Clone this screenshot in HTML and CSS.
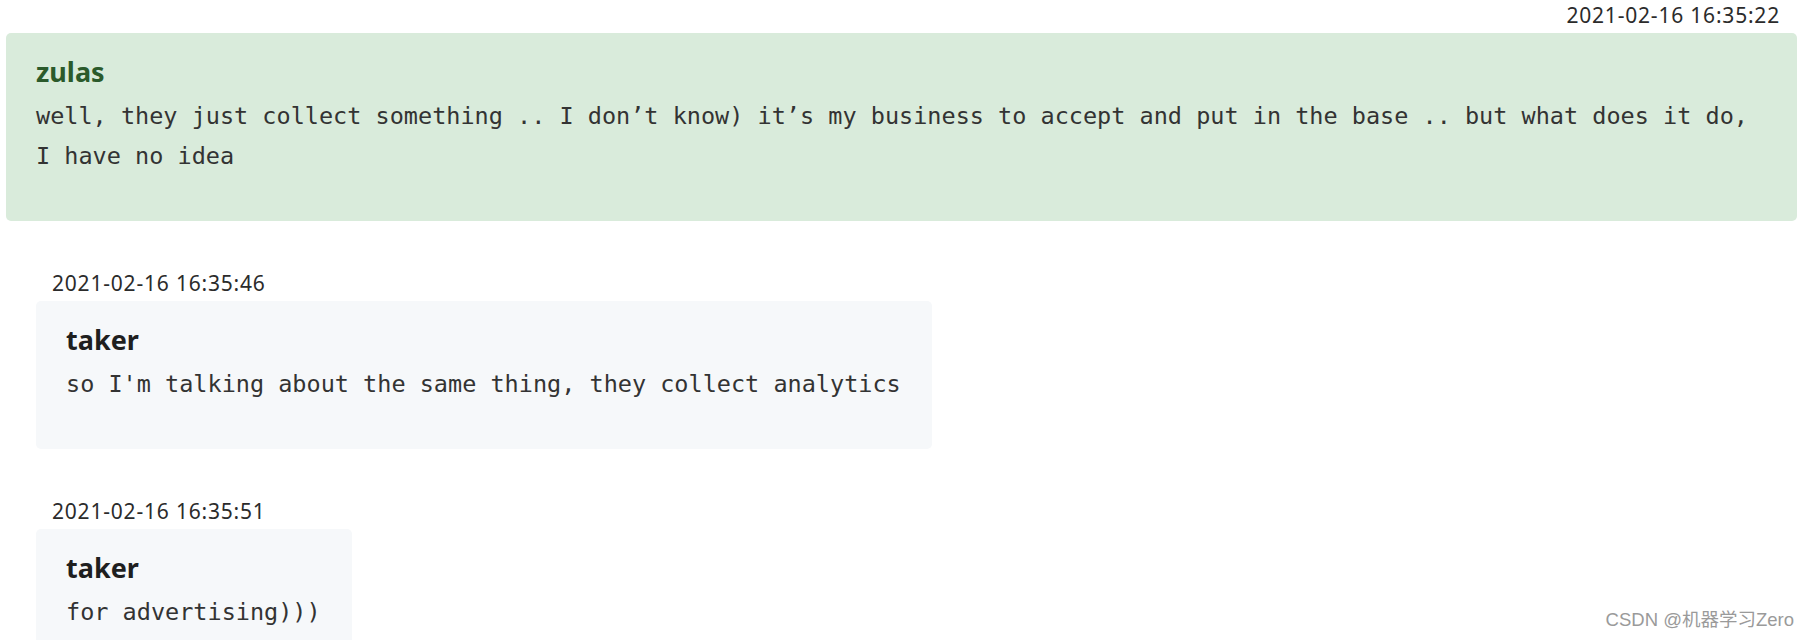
FILE: index.html
```html
<!DOCTYPE html>
<html lang="en">
<head>
<meta charset="utf-8">
<title>Chat</title>
<link rel="stylesheet" href="styles.css">
</head>
<body>
<div class="chat">
  <div class="msg msg-out">
    <div class="time">2021-02-16 16:35:22</div>
    <div class="bubble bubble-out">
      <div class="name name-out">zulas</div>
      <div class="text">well, they just collect something .. I don’t know) it’s my business to accept and put in the base .. but what does it do, I have no idea</div>
    </div>
  </div>
  <div class="msg msg-in">
    <div class="time">2021-02-16 16:35:46</div>
    <div class="bubble bubble-in">
      <div class="name">taker</div>
      <div class="text">so I'm talking about the same thing, they collect analytics</div>
    </div>
  </div>
  <div class="msg msg-in">
    <div class="time">2021-02-16 16:35:51</div>
    <div class="bubble bubble-in">
      <div class="name">taker</div>
      <div class="text">for advertising)))</div>
    </div>
  </div>
</div>
<div class="watermark">CSDN @机器学习Zero</div>
</body>
</html>
```

FILE: styles.css
```css
html, body {
  margin: 0;
  padding: 0;
  height: 640px;
  overflow: hidden;
  background: #ffffff;
}

body {
  font-family: "Noto Sans", "Open Sans", sans-serif;
  color: #333333;
  position: relative;
}

.chat {
  display: flex;
  flex-direction: column;
  padding: 3px 13px 0 6px;
}

.msg {
  display: flex;
  flex-direction: column;
}

.msg + .msg {
  margin-top: 50px;
}

.msg-out {
  align-items: stretch;
}

.msg-in {
  align-items: flex-start;
  margin-left: 30px;
}

.time {
  font-family: "Noto Sans", sans-serif;
  font-size: 21px;
  letter-spacing: 0.8px;
  line-height: 24px;
  color: #2b2b2b;
  margin-bottom: 6px;
}

.msg-out .time {
  text-align: right;
  padding-right: 17px;
}

.msg-in .time {
  padding-left: 16px;
}

.bubble {
  border-radius: 5px;
  padding: 24px 31px 45px 30px;
}

.bubble-out {
  background: #d9ebdb;
}

.bubble-in {
  background: #f6f8fa;
}

.name {
  font-family: "Noto Sans", sans-serif;
  font-weight: 700;
  font-size: 27px;
  line-height: 30px;
  color: #1f1f1f;
}

.name-out {
  color: #2b5a2b;
}

.text {
  font-family: "DejaVu Sans Mono", "Liberation Mono", monospace;
  font-size: 23.5px;
  line-height: 40px;
  color: #333333;
  margin-top: 9px;
}

.watermark {
  position: absolute;
  right: 16px;
  bottom: 9px;
  font-family: "Liberation Sans", "Noto Sans CJK SC", sans-serif;
  font-size: 18.5px;
  color: #9a9a9a;
  text-shadow: 0 0 1px #ffffff;
}
```
